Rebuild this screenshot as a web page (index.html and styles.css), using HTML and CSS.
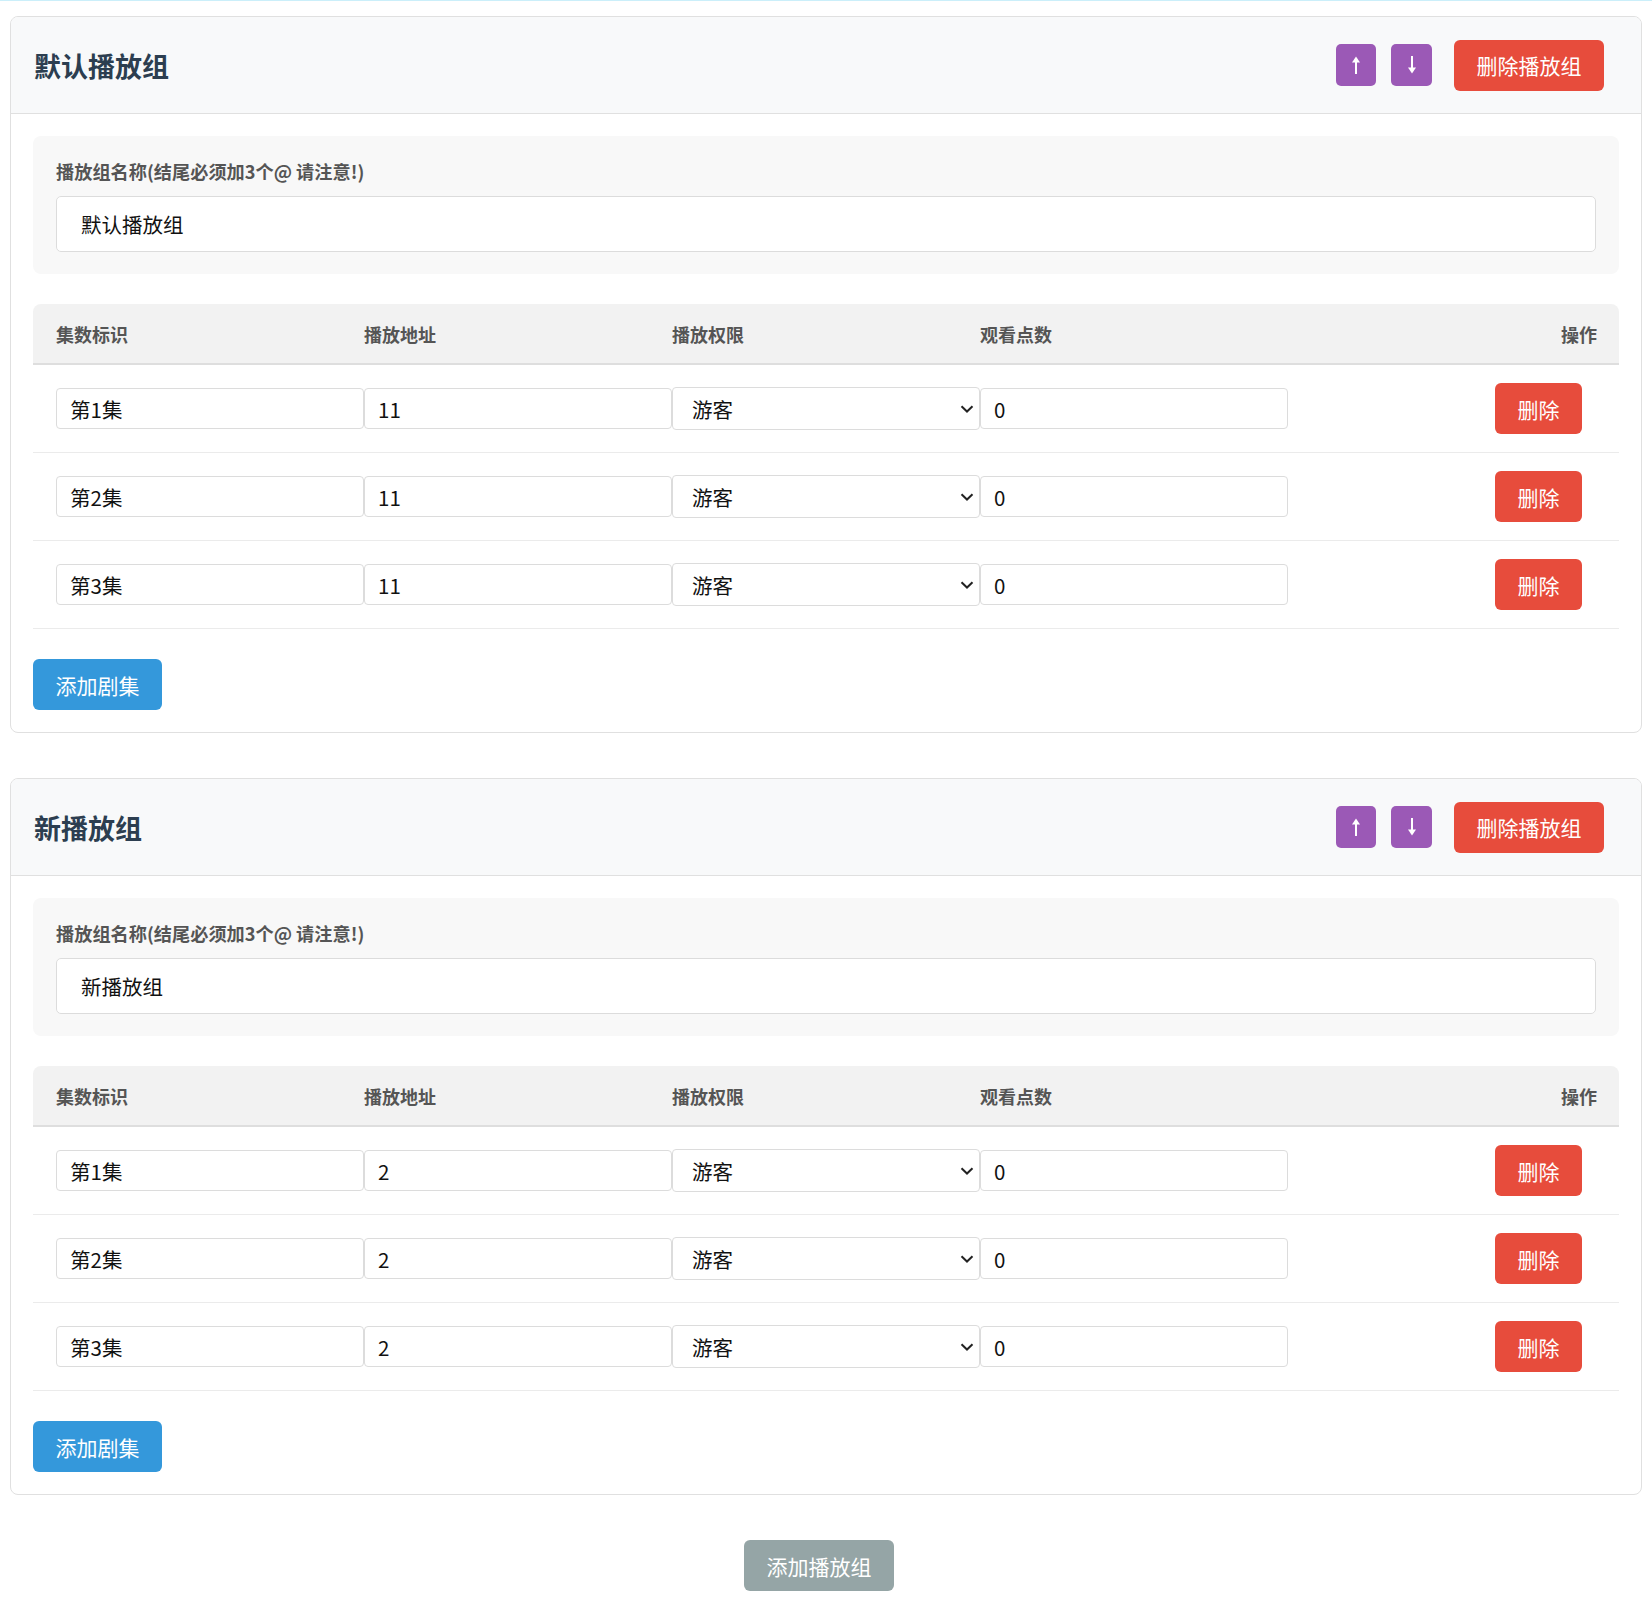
FILE: index.html
```html
<!DOCTYPE html>
<html lang="zh-CN">
<head>
<meta charset="utf-8">
<title>播放组</title>
<link rel="stylesheet" href="styles.css">
</head>
<body>
<div class="topline"></div>

<div class="card">
  <div class="card-header">
    <h2 class="card-title">默认播放组</h2>
    <div class="actions">
      <button class="btn btn-move btn-up" type="button"><svg width="10" height="18" viewBox="0 0 10 18"><path d="M5 3 V18" stroke="#fff" stroke-width="2"/><path d="M1 6.5 L5 0.5 L9 6.5 Z" fill="#fff"/></svg></button>
      <button class="btn btn-move btn-down" type="button"><svg width="10" height="18" viewBox="0 0 10 18"><path d="M5 0 V15" stroke="#fff" stroke-width="2"/><path d="M1 11.5 L5 17.5 L9 11.5 Z" fill="#fff"/></svg></button>
      <button class="btn btn-danger btn-group-del" type="button">删除播放组</button>
    </div>
  </div>
  <div class="card-body">
    <div class="name-box">
      <label class="name-label">播放组名称(结尾必须加3个@ 请注意!)</label>
      <input class="name-input" type="text" value="默认播放组">
    </div>
    <table class="ep-table">
      <colgroup><col class="c1"><col class="c2"><col class="c3"><col class="c4"><col class="c5"></colgroup>
      <thead>
        <tr><th>集数标识</th><th>播放地址</th><th>播放权限</th><th>观看点数</th><th class="th-op">操作</th></tr>
      </thead>
      <tbody>
        <tr>
          <td><input class="cell-input" type="text" value="第1集"></td>
          <td><input class="cell-input" type="text" value="11"></td>
          <td><div class="select-wrap"><select class="cell-select"><option>游客</option></select><svg class="chev" width="14" height="8" viewBox="0 0 14 8"><path d="M1.5 1.2 L7 6.5 L12.5 1.2" fill="none" stroke="#222" stroke-width="2"/></svg></div></td>
          <td><input class="cell-input" type="text" value="0"></td>
          <td class="td-op"><button class="btn btn-danger btn-del" type="button">删除</button></td>
        </tr>
        <tr>
          <td><input class="cell-input" type="text" value="第2集"></td>
          <td><input class="cell-input" type="text" value="11"></td>
          <td><div class="select-wrap"><select class="cell-select"><option>游客</option></select><svg class="chev" width="14" height="8" viewBox="0 0 14 8"><path d="M1.5 1.2 L7 6.5 L12.5 1.2" fill="none" stroke="#222" stroke-width="2"/></svg></div></td>
          <td><input class="cell-input" type="text" value="0"></td>
          <td class="td-op"><button class="btn btn-danger btn-del" type="button">删除</button></td>
        </tr>
        <tr>
          <td><input class="cell-input" type="text" value="第3集"></td>
          <td><input class="cell-input" type="text" value="11"></td>
          <td><div class="select-wrap"><select class="cell-select"><option>游客</option></select><svg class="chev" width="14" height="8" viewBox="0 0 14 8"><path d="M1.5 1.2 L7 6.5 L12.5 1.2" fill="none" stroke="#222" stroke-width="2"/></svg></div></td>
          <td><input class="cell-input" type="text" value="0"></td>
          <td class="td-op"><button class="btn btn-danger btn-del" type="button">删除</button></td>
        </tr>
      </tbody>
    </table>
    <button class="btn btn-primary btn-add-ep" type="button">添加剧集</button>
  </div>
</div>

<div class="card">
  <div class="card-header">
    <h2 class="card-title">新播放组</h2>
    <div class="actions">
      <button class="btn btn-move btn-up" type="button"><svg width="10" height="18" viewBox="0 0 10 18"><path d="M5 3 V18" stroke="#fff" stroke-width="2"/><path d="M1 6.5 L5 0.5 L9 6.5 Z" fill="#fff"/></svg></button>
      <button class="btn btn-move btn-down" type="button"><svg width="10" height="18" viewBox="0 0 10 18"><path d="M5 0 V15" stroke="#fff" stroke-width="2"/><path d="M1 11.5 L5 17.5 L9 11.5 Z" fill="#fff"/></svg></button>
      <button class="btn btn-danger btn-group-del" type="button">删除播放组</button>
    </div>
  </div>
  <div class="card-body">
    <div class="name-box">
      <label class="name-label">播放组名称(结尾必须加3个@ 请注意!)</label>
      <input class="name-input" type="text" value="新播放组">
    </div>
    <table class="ep-table">
      <colgroup><col class="c1"><col class="c2"><col class="c3"><col class="c4"><col class="c5"></colgroup>
      <thead>
        <tr><th>集数标识</th><th>播放地址</th><th>播放权限</th><th>观看点数</th><th class="th-op">操作</th></tr>
      </thead>
      <tbody>
        <tr>
          <td><input class="cell-input" type="text" value="第1集"></td>
          <td><input class="cell-input" type="text" value="2"></td>
          <td><div class="select-wrap"><select class="cell-select"><option>游客</option></select><svg class="chev" width="14" height="8" viewBox="0 0 14 8"><path d="M1.5 1.2 L7 6.5 L12.5 1.2" fill="none" stroke="#222" stroke-width="2"/></svg></div></td>
          <td><input class="cell-input" type="text" value="0"></td>
          <td class="td-op"><button class="btn btn-danger btn-del" type="button">删除</button></td>
        </tr>
        <tr>
          <td><input class="cell-input" type="text" value="第2集"></td>
          <td><input class="cell-input" type="text" value="2"></td>
          <td><div class="select-wrap"><select class="cell-select"><option>游客</option></select><svg class="chev" width="14" height="8" viewBox="0 0 14 8"><path d="M1.5 1.2 L7 6.5 L12.5 1.2" fill="none" stroke="#222" stroke-width="2"/></svg></div></td>
          <td><input class="cell-input" type="text" value="0"></td>
          <td class="td-op"><button class="btn btn-danger btn-del" type="button">删除</button></td>
        </tr>
        <tr>
          <td><input class="cell-input" type="text" value="第3集"></td>
          <td><input class="cell-input" type="text" value="2"></td>
          <td><div class="select-wrap"><select class="cell-select"><option>游客</option></select><svg class="chev" width="14" height="8" viewBox="0 0 14 8"><path d="M1.5 1.2 L7 6.5 L12.5 1.2" fill="none" stroke="#222" stroke-width="2"/></svg></div></td>
          <td><input class="cell-input" type="text" value="0"></td>
          <td class="td-op"><button class="btn btn-danger btn-del" type="button">删除</button></td>
        </tr>
      </tbody>
    </table>
    <button class="btn btn-primary btn-add-ep" type="button">添加剧集</button>
  </div>
</div>

<div class="footer-actions">
  <button class="btn btn-secondary btn-add-group" type="button">添加播放组</button>
</div>
</body>
</html>
```

FILE: styles.css
```css
html, body {
  margin: 0;
  background: #fff;
}
body {
  padding: 0 10px;
  font-family: "Noto Sans CJK SC", "Liberation Sans", sans-serif;
  color: #333;
}
.topline {
  height: 1px;
  background: #cbeffa;
  margin: 0 -10px 15px;
}
.card {
  border: 1px solid #e0e0e0;
  border-radius: 8px;
  margin-bottom: 45px;
  background: #fff;
  overflow: hidden;
}
.card-header {
  height: 97px;
  box-sizing: border-box;
  background: #f8f9fa;
  border-bottom: 1px solid #e0e0e0;
  display: flex;
  align-items: center;
  justify-content: space-between;
  padding: 0 22px 0 23px;
}
.card-title {
  margin: 0;
  padding-top: 3px;
  font-size: 27px;
  font-weight: 700;
  color: #2c3e50;
  line-height: 1.2;
}
.actions {
  display: flex;
  align-items: center;
}
.btn {
  border: none;
  color: #fff;
  font-family: "Noto Sans CJK SC", "Liberation Sans", sans-serif;
  font-size: 21px;
  border-radius: 6px;
  cursor: pointer;
  padding: 0;
  display: inline-flex;
  align-items: center;
  justify-content: center;
}
.btn-move {
  background: #9b59b6;
  height: 42px;
  border-radius: 5px;
}
.btn-up {
  width: 40px;
  margin-right: 15px;
}
.btn-down {
  width: 41px;
  margin-right: 22px;
}
.btn-danger {
  background: #e74c3c;
}
.btn-group-del {
  width: 150px;
  height: 51px;
  margin-right: 15px;
}
.card-body {
  padding: 22px;
}
.name-box {
  background: #f8f8f8;
  border-radius: 8px;
  padding: 22px 23px;
}
.name-label {
  display: block;
  font-size: 18.2px;
  font-weight: 700;
  color: #555;
  line-height: 26px;
  margin-bottom: 11.5px;
}
.name-input {
  display: block;
  width: 100%;
  box-sizing: border-box;
  height: 56px;
  border: 1px solid #dcdcdc;
  border-radius: 5px;
  background: #fff;
  padding: 0 22px 0 24px;
  font-family: "Noto Sans CJK SC", "Liberation Sans", sans-serif;
  font-size: 20.5px;
  color: #111;
}
.ep-table {
  width: 100%;
  margin-top: 30.5px;
  border-collapse: separate;
  border-spacing: 0;
  table-layout: fixed;
}
.c1 { width: 331px; }
.c2 { width: 308px; }
.c3 { width: 308px; }
.c4 { width: 308px; }
.ep-table th {
  height: 59px;
  background: #f2f2f2;
  border-bottom: 2px solid #dedede;
  font-size: 18px;
  font-weight: 700;
  color: #555;
  text-align: left;
  padding: 0;
}
.ep-table th:first-child {
  padding-left: 23px;
  border-top-left-radius: 8px;
}
.ep-table th.th-op {
  text-align: right;
  padding-right: 22px;
  border-top-right-radius: 8px;
}
.ep-table td {
  height: 87px;
  padding: 0;
  border-bottom: 1px solid #ebebeb;
  vertical-align: middle;
}
.ep-table td:first-child {
  padding-left: 23px;
}
.ep-table td.td-op {
  text-align: right;
  padding-right: 37px;
}
.cell-input {
  display: block;
  width: 100%;
  box-sizing: border-box;
  height: 41px;
  border: 1px solid #dcdcdc;
  border-radius: 4px;
  background: #fff;
  padding: 0 12px 0 13px;
  font-family: "Noto Sans CJK SC", "Liberation Sans", sans-serif;
  font-size: 20.5px;
  color: #111;
}
.select-wrap {
  position: relative;
}
.cell-select {
  display: block;
  width: 100%;
  box-sizing: border-box;
  height: 43px;
  border: 1px solid #dcdcdc;
  border-radius: 4px;
  background-color: #fff;
  -webkit-appearance: none;
  appearance: none;
  padding: 0 30px 0 19px;
  font-family: "Noto Sans CJK SC", "Liberation Sans", sans-serif;
  font-size: 20.5px;
  color: #111;
}
.chev {
  position: absolute;
  right: 6px;
  top: 18px;
  pointer-events: none;
}
.btn-del {
  width: 87px;
  height: 51px;
}
.btn-primary {
  background: #3498db;
}
.btn-add-ep {
  margin-top: 30px;
  width: 129px;
  height: 51px;
}
.footer-actions {
  display: flex;
  justify-content: center;
  padding-right: 14px;
  padding-bottom: 12px;
}
.btn-secondary {
  background: #95a5a6;
}
.btn-add-group {
  width: 150px;
  height: 51px;
}
```
